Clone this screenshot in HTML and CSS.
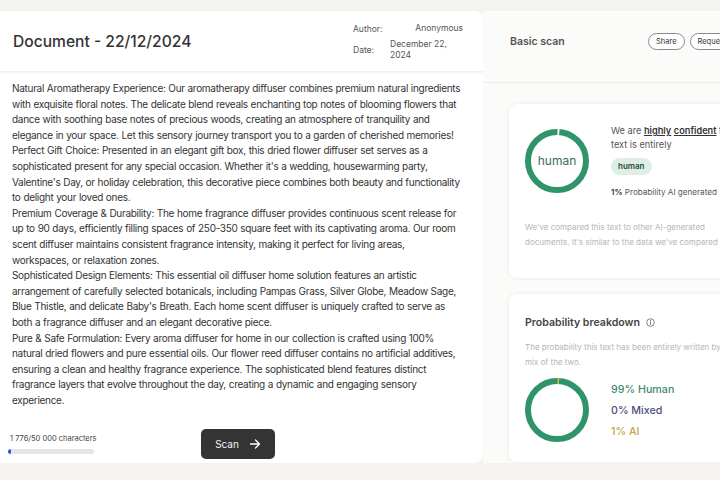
FILE: index.html
```html
<!DOCTYPE html>
<html lang="en">
<head>
<meta charset="UTF-8">
<title>Document scan</title>
<link rel="stylesheet" href="styles.css">
</head>
<body>
<div class="page">
    <div class="doc-card">
        <div class="doc-header">
            <h1 class="doc-title">Document - 22/12/2024</h1>
            <div class="doc-meta">
                <div class="meta-row">
                    <span class="meta-label">Author:</span>
                    <span class="meta-value right">Anonymous</span>
                </div>
                <div class="meta-row">
                    <span class="meta-label">Date:</span>
                    <span class="meta-value">December 22,<br>2024</span>
                </div>
            </div>
        </div>
        <div class="doc-body">
            Natural Aromatherapy Experience: Our aromatherapy diffuser combines premium natural ingredients with exquisite floral notes. The delicate blend reveals enchanting top notes of blooming flowers that dance with soothing base notes of precious woods, creating an atmosphere of tranquility and elegance in your space. Let this sensory journey transport you to a garden of cherished memories!<br>
            Perfect Gift Choice: Presented in an elegant gift box, this dried flower diffuser set serves as a sophisticated present for any special occasion. Whether it's a wedding, housewarming party, Valentine's Day, or holiday celebration, this decorative piece combines both beauty and functionality to delight your loved ones.<br>
            Premium Coverage &amp; Durability: The home fragrance diffuser provides continuous scent release for up to 90 days, efficiently filling spaces of 250-350 square feet with its captivating aroma. Our room scent diffuser maintains consistent fragrance intensity, making it perfect for living areas, workspaces, or relaxation zones.<br>
            Sophisticated Design Elements: This essential oil diffuser home solution features an artistic arrangement of carefully selected botanicals, including Pampas Grass, Silver Globe, Meadow Sage, Blue Thistle, and delicate Baby's Breath. Each home scent diffuser is uniquely crafted to serve as both a fragrance diffuser and an elegant decorative piece.<br>
            Pure &amp; Safe Formulation: Every aroma diffuser for home in our collection is crafted using 100% natural dried flowers and pure essential oils. Our flower reed diffuser contains no artificial additives, ensuring a clean and healthy fragrance experience. The sophisticated blend features distinct fragrance layers that evolve throughout the day, creating a dynamic and engaging sensory experience.
        </div>
        <div class="doc-footer">
            <div class="char-count">
                <div class="char-label">1 776/50 000 characters</div>
                <div class="char-bar"><div class="char-fill" style="width: 4%"></div></div>
            </div>
            <button class="scan-btn">Scan
                <svg width="12" height="12" viewBox="0 0 12 12" fill="none" stroke="#fff" stroke-width="1.3" stroke-linecap="round" stroke-linejoin="round">
                    <path d="M1.5 6h9M6.5 2l4 4-4 4"/>
                </svg>
            </button>
        </div>
    </div>

    <div class="scan-panel">
        <div class="scan-header">
            <span class="scan-title">Basic scan</span>
            <div class="scan-actions">
                <button class="pill-btn">Share</button>
                <button class="pill-btn">Request</button>
            </div>
        </div>
        <div class="scan-cards">
            <div class="result-card">
                <div class="result-top">
                    <div class="donut">
                        <svg width="64" height="64" viewBox="0 0 64 64">
                            <circle cx="32" cy="32" r="29" fill="none" stroke="#2f946a" stroke-width="6"/>
                            <circle cx="32" cy="32" r="29" fill="none" stroke="#ffffff" stroke-width="7" stroke-dasharray="1.8 184" transform="rotate(-89 32 32)"/>
                        </svg>
                        <span class="donut-label">human</span>
                    </div>
                    <div class="verdict">
                        <p class="verdict-text">We are <b>highly</b> <b>confident</b> that this text is entirely</p>
                        <span class="tag">human</span>
                        <p class="prob"><b>1%</b> Probability AI generated</p>
                    </div>
                </div>
                <p class="muted">We've compared this text to other AI-generated documents. It's similar to the data we've compared to.</p>
            </div>

            <div class="result-card breakdown">
                <div class="card-title">Probability breakdown
                    <svg width="9" height="9" viewBox="0 0 10 10" fill="none" stroke="#666" stroke-width="0.9">
                        <circle cx="5" cy="5" r="4.2"/>
                        <path d="M5 4.3v2.8" stroke-linecap="round"/>
                        <circle cx="5" cy="2.9" r="0.3" fill="#666"/>
                    </svg>
                </div>
                <p class="muted">The probability this text has been entirely written by a human, AI or a mix of the two.</p>
                <div class="breakdown-row">
                    <svg width="64" height="64" viewBox="0 0 64 64">
                        <circle cx="32" cy="32" r="29" fill="none" stroke="#2f946a" stroke-width="6"/>
                        <circle cx="32" cy="32" r="29" fill="none" stroke="#d8b84a" stroke-width="6" stroke-dasharray="1.6 184" transform="rotate(-89 32 32)"/>
                    </svg>
                    <ul class="legend">
                        <li class="human">99% Human</li>
                        <li class="mixed">0% Mixed</li>
                        <li class="ai">1% AI</li>
                    </ul>
                </div>
            </div>
        </div>
    </div>
</div>
</body>
</html>
```

FILE: styles.css
```css
body {
    margin: 0;
    background-color: #f4f3ef;
    font-family: Inter, "Liberation Sans", sans-serif;
    color: #3a3a3a;
}
.page {
    display: flex;
    padding-top: 11px;
    height: 452px;
    overflow: hidden;
}

/* left: the document */
.doc-card {
    width: 483px;
    flex-shrink: 0;
    background-color: #ffffff;
    border-radius: 0 8px 8px 0;
    display: flex;
    flex-direction: column;
}
.doc-header {
    height: 61px;
    flex-shrink: 0;
    display: flex;
    justify-content: space-between;
    box-shadow: 0 1px 2px rgba(0, 0, 0, 0.06);
    border-bottom: 1px solid #f0f0ee;
    box-sizing: border-box;
}
.doc-title {
    margin: 0;
    padding: 21px 0 0 13px;
    font-size: 15.6px;
    font-weight: 500;
    color: #333333;
}
.doc-meta {
    width: 110px;
    margin-right: 20px;
    padding-top: 12px;
    font-size: 8.5px;
    color: #555555;
}
.meta-row {
    display: flex;
    align-items: center;
    margin-bottom: 5px;
}
.meta-label {
    width: 37px;
}
.meta-value {
    flex: 1;
    line-height: 11px;
}
.meta-value.right {
    text-align: right;
}
.doc-body {
    padding: 9px 20px 0 12px;
    font-size: 10px;
    letter-spacing: -0.3px;
    word-spacing: 0.3px;
    line-height: 15.6px;
    color: #333333;
    flex: 1;
    overflow: hidden;
}
.doc-footer {
    display: flex;
    align-items: flex-end;
    padding: 0 0 4px 8px;
}
.char-count {
    width: 193px;
    padding-bottom: 5px;
}
.char-label {
    font-size: 7.5px;
    color: #444444;
    padding-left: 2px;
    margin-bottom: 6px;
}
.char-bar {
    width: 86px;
    height: 5px;
    background-color: #e6e6e6;
    border-radius: 3px;
    overflow: hidden;
}
.char-fill {
    height: 100%;
    background-color: #2f55d4;
    border-radius: 3px;
}
.scan-btn {
    width: 74px;
    height: 30px;
    border: none;
    border-radius: 5px;
    background-color: #343434;
    color: #f2f2f2;
    font-family: inherit;
    font-size: 10px;
    display: flex;
    align-items: center;
    justify-content: center;
    gap: 10px;
}

/* right: scan results */
.scan-panel {
    flex: 1;
    height: 452px;
    background-color: #fbfbfa;
    overflow: hidden;
}
.scan-header {
    height: 72px;
    box-sizing: border-box;
    padding: 22px 0 0 27px;
    display: flex;
    justify-content: space-between;
    align-items: flex-start;
    border-bottom: 1px solid #ececea;
    white-space: nowrap;
}
.scan-title {
    font-size: 10.5px;
    font-weight: 600;
    color: #555555;
    line-height: 17px;
}
.scan-actions {
    width: 72px;
    flex-shrink: 0;
    display: flex;
    gap: 5px;
}
.pill-btn {
    flex-shrink: 0;
    height: 17px;
    padding: 0 7px;
    border: 1px solid #8a8a8a;
    border-radius: 9px;
    background-color: #ffffff;
    font-family: inherit;
    font-size: 7.5px;
    color: #333333;
}
.scan-cards {
    padding: 21px 0 0 26px;
    display: flex;
    flex-direction: column;
    gap: 16px;
}
.result-card {
    width: 330px;
    height: 174px;
    box-sizing: border-box;
    background-color: #ffffff;
    border-radius: 8px;
    box-shadow: 0 0 4px rgba(0, 0, 0, 0.08);
    padding: 20px 16px 0 16px;
}
.result-top {
    display: flex;
    gap: 22px;
}
.donut {
    width: 64px;
    height: 64px;
    margin-top: 5px;
    position: relative;
    flex-shrink: 0;
}
.donut svg {
    display: block;
}
.donut-label {
    position: absolute;
    top: 0;
    left: 0;
    width: 64px;
    line-height: 64px;
    text-align: center;
    font-size: 12px;
    color: #3d6a5c;
}
.verdict {
    white-space: nowrap;
}
.verdict-text {
    margin: 0;
    width: 160px;
    white-space: normal;
    font-size: 9.2px;
    line-height: 14px;
    color: #555555;
}
.verdict-text b {
    font-weight: 600;
    color: #333333;
    text-decoration: underline;
}
.tag {
    display: inline-block;
    margin-top: 6px;
    padding: 0 7px;
    height: 17px;
    line-height: 17px;
    border-radius: 9px;
    background-color: #ddeee5;
    font-size: 8px;
    font-weight: 600;
    color: #2f4a40;
}
.prob {
    margin: 12px 0 0 0;
    font-size: 8.1px;
    color: #555555;
}
.prob b {
    font-weight: 600;
    color: #333333;
}
.muted {
    margin: 23px 0 0 0;
    font-size: 8px;
    line-height: 14.5px;
    color: #b5b5bb;
    width: 215px;
}
.breakdown {
    height: 168px;
}
.card-title {
    font-size: 10.6px;
    font-weight: 600;
    color: #444444;
    display: flex;
    align-items: center;
    gap: 6px;
    margin-top: 2px;
}
.breakdown .muted {
    margin-top: 11px;
    width: 262px;
}
.breakdown-row {
    display: flex;
    align-items: center;
    gap: 22px;
    margin-top: 9px;
}
.legend {
    list-style: none;
    margin: 0;
    padding: 0;
    font-size: 10.7px;
    font-weight: 500;
    line-height: 21px;
}
.legend .human { color: #3c8a68; }
.legend .mixed { color: #524c7c; }
.legend .ai { color: #c9a143; }
```
